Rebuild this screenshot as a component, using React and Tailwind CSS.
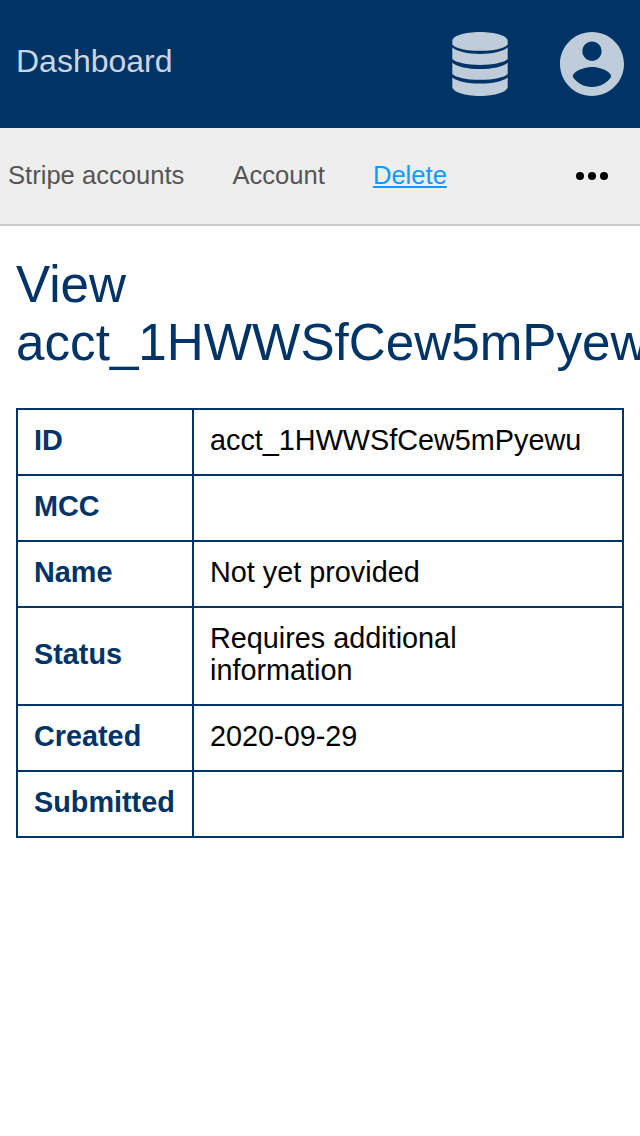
const rows = [
  ['ID', 'acct_1HWWSfCew5mPyewu'],
  ['MCC', ''],
  ['Name', 'Not yet provided'],
  ['Status', 'Requires additional information'],
  ['Created', '2020-09-29'],
  ['Submitted', ''],
];

function DatabaseIcon() {
  return (
    <svg viewBox="0 0 56 64" className="h-16 w-14" fill="currentColor">
      <path d="M28 0C12.700 0 .3 3.900 .3 8.800v3.600C3.500 16.300 14.700 18.800 28 18.800s24.500-2.500 27.700-6.400V8.800C55.700 3.900 43.300 0 28 0z" />
      <path d="M.3 15.600v11.500C3.500 30.600 14.700 32.900 28 32.900s24.500-2.300 27.700-5.800V15.600C50.500 19.600 40.500 22 28 22S5.500 19.600 .3 15.600z" />
      <path d="M.3 30.700v11.300C3.500 45.500 14.700 47.800 28 47.800s24.500-2.300 27.700-5.800V30.700C50.500 34.700 40.500 37 28 37S5.500 34.700 .3 30.700z" />
      <path d="M.3 45.500v9.300C.3 59.900 12.700 64 28 64s27.700-4.100 27.700-9.200v-9.300C50.500 49.400 40.500 51.600 28 51.600S5.500 49.400 .3 45.500z" />
    </svg>
  );
}

function AccountIcon() {
  return (
    <svg viewBox="2 2 20 20" className="size-16" fill="currentColor">
      <path d="M12 2C6.480 2 2 6.480 2 12s4.480 10 10 10 10-4.480 10-10S17.520 2 12 2zm0 3c1.660 0 3 1.340 3 3s-1.340 3-3 3-3-1.340-3-3 1.340-3 3-3zm0 14.200c-2.500 0-4.710-1.280-6-3.220.03-1.990 4-3.080 6-3.080 1.990 0 5.970 1.090 6 3.080-1.290 1.940-3.500 3.220-6 3.220z" />
    </svg>
  );
}

export default function App() {
  return (
    <div className="min-h-[1136px] w-[640px] overflow-hidden bg-white font-['Liberation_Sans',Arial,sans-serif]">
      <header className="flex h-32 items-center bg-[#003366] px-4 text-[#bfccd9]">
        <a className="mr-auto -mt-1.5 text-[32px] text-[#ccd6e0]">Dashboard</a>
        <DatabaseIcon />
        <span className="ml-[52px]"><AccountIcon /></span>
      </header>
      <nav className="flex h-[98px] items-center border-b-2 border-[#cccccc] bg-[#eeeeee] pl-2 text-[25.6px] text-[#555555]">
        <a className="-mt-0.5">Stripe accounts</a>
        <a className="-mt-0.5 ml-12">Account</a>
        <a className="-mt-0.5 ml-12 text-[#1199ff] underline">Delete</a>
        <svg viewBox="0 0 32 8" className="mr-8 ml-auto h-2 w-8" fill="#000">
          <circle cx="4" cy="4" r="4" /><circle cx="16" cy="4" r="4" /><circle cx="28" cy="4" r="4" />
        </svg>
      </nav>
      <main className="px-4 pt-[30px]">
        <h1 className="mb-9 text-[51.2px] leading-[58px] text-[#003366]">View acct_1HWWSfCew5mPyewu</h1>
        <table className="w-full border-collapse text-[28.8px] leading-8">
          <tbody>
            {rows.map(([label, value]) => (
              <tr key={label} className="h-[66px]">
                <th className="w-44 border-2 border-[#003366] px-4 pt-3.5 pb-[18px] text-left font-bold text-[#003366]">{label}</th>
                <td className="border-2 border-[#003366] px-4 pt-3.5 pb-[18px] text-black">{value}</td>
              </tr>
            ))}
          </tbody>
        </table>
      </main>
    </div>
  );
}
